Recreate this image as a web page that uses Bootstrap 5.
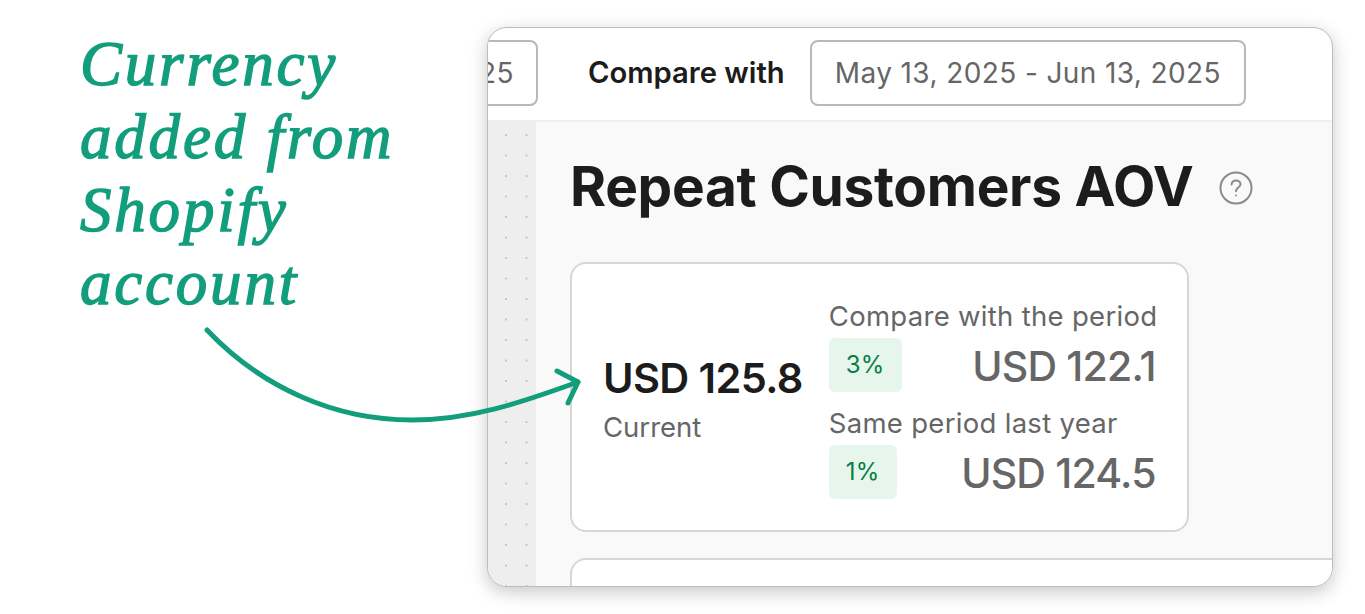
<!DOCTYPE html>
<html lang="en">
<head>
    <meta charset="UTF-8">
    <title>Repeat Customers AOV</title>
    <link href="https://cdn.jsdelivr.net/npm/bootstrap@5.3.0/dist/css/bootstrap.min.css" rel="stylesheet">
    <style>
        html, body { height: 100%; overflow: hidden; }
        body { background: #fff; font-family: Inter, "Liberation Sans", sans-serif; color: #1c1c1c; }
        .stage { height: 614px; padding: 27px 32px 28px 80px; position: relative; }
        .callout-col { width: 407px; flex: none; padding-top: 1px; }
        .callout { margin: 0; color: #129e7c; font-family: "Liberation Serif", serif; font-style: italic; font-size: 63px; line-height: 73px; letter-spacing: 2.8px; -webkit-text-stroke: 1.4px #129e7c; }
        .callout span { display: block; }
        .arrow { position: absolute; left: 0; top: 0; z-index: 5; pointer-events: none; }
        .app-window { width: 846px; height: 560px; flex: none; background: #fff; border: 1px solid #bdbdbd; border-radius: 20px; overflow: hidden; box-shadow: 0 5px 18px rgba(0,0,0,.22); }
        .top-bar { height: 94px; flex: none; padding-top: 12px; padding-bottom: 15px; border-bottom: 2px solid #efefef; }
        .date-box { height: 66px; flex: none; border: 2px solid #b8b8b8; border-radius: 8px; color: #666; font-size: 28px; letter-spacing: .4px; padding: 0 23px; background: #fff; }
        .date-box-cut { width: 120px; margin-left: -70px; padding-right: 22px; }
        .compare-label { font-size: 29.2px; font-weight: 600; margin: 0 25px 0 50px; white-space: nowrap; }
        .side-strip { width: 48px; flex: none; background-color: #eee; background-image: radial-gradient(circle at 1px 1px, #bcbcbc 0.6px, transparent 1.1px); background-size: 20.5px 20.5px; background-position: 17px 12px; }
        .main-area { background: #f9f9f9; padding: 0 0 0 34px; min-width: 0; }
        .title-row { margin-top: 33px; }
        .page-title { font-size: 55px; font-weight: 700; line-height: 62px; margin: 0; letter-spacing: -.3px; white-space: nowrap; }
        .help-ico { width: 34px; height: 34px; margin-left: 25px; margin-top: 3px; }
        .metric-box { width: 619px; height: 270px; margin-top: 45px; flex: none; background: #fff; border: 2px solid #d6d6d6; border-radius: 16px; padding: 0 30px 0 31px; }
        .metric-box-next { width: 900px; margin-top: 26px; }
        .now-block { padding-top: 5px; }
        .now-val { font-size: 41.5px; font-weight: 600; line-height: 48px; letter-spacing: -.6px; white-space: nowrap; }
        .now-label { font-size: 27.5px; line-height: 38px; color: #666; margin-top: 6px; }
        .cmp-col { width: 327px; margin-left: 26px; flex: none; padding-top: 2px; }
        .cmp-label { font-size: 27.5px; line-height: 38px; color: #666; letter-spacing: .3px; white-space: nowrap; }
        .cmp-row { height: 54px; margin: 3px 0 12px; }
        .pct-tag { height: 54px; padding: 0 17px; background: #e6f6ec; color: #0a7d45; border-radius: 6px; font-size: 24px; letter-spacing: .3px; }
        .cmp-val { font-size: 41px; font-weight: 500; color: #666; letter-spacing: -.8px; white-space: nowrap; padding-top: 4px; }
    </style>
</head>
<body>

<div class="stage d-flex">
    <div class="callout-col">
        <p class="callout"><span>Currency</span><span>added from</span><span>Shopify</span><span>account</span></p>
    </div>

    <div class="app-window d-flex flex-column">
        <div class="top-bar d-flex align-items-center">
            <div class="date-box date-box-cut d-flex align-items-center justify-content-end">2025</div>
            <div class="compare-label">Compare with</div>
            <div class="date-box d-flex align-items-center text-nowrap">May 13, 2025 - Jun 13, 2025</div>
        </div>
        <div class="d-flex flex-grow-1 overflow-hidden">
            <div class="side-strip"></div>
            <div class="main-area flex-grow-1 d-flex flex-column">
                <div class="title-row d-flex align-items-center">
                    <h1 class="page-title">Repeat Customers AOV</h1>
                    <svg class="help-ico" viewBox="0 0 34 34" fill="none" stroke="#8a8a8a" stroke-width="2" stroke-linecap="round">
                        <circle cx="17" cy="17" r="15.5"/>
                        <path d="M12.6 13.4c.3-2.5 2.2-4 4.5-4 2.500 0 4.400 1.600 4.400 3.800 0 3.300-4.500 3.500-4.500 7"/>
                        <circle cx="17" cy="24.500" r="1" fill="#8a8a8a" stroke="none"/>
                    </svg>
                </div>
                <div class="metric-box d-flex align-items-center">
                    <div class="now-block flex-shrink-0">
                        <div class="now-val">USD 125.8</div>
                        <div class="now-label">Current</div>
                    </div>
                    <div class="cmp-col">
                        <div class="cmp-label">Compare with the period</div>
                        <div class="cmp-row d-flex align-items-center justify-content-between">
                            <span class="pct-tag d-flex align-items-center">3%</span>
                            <span class="cmp-val">USD 122.1</span>
                        </div>
                        <div class="cmp-label">Same period last year</div>
                        <div class="cmp-row d-flex align-items-center justify-content-between mb-0">
                            <span class="pct-tag d-flex align-items-center">1%</span>
                            <span class="cmp-val">USD 124.5</span>
                        </div>
                    </div>
                </div>
                <div class="metric-box metric-box-next"></div>
            </div>
        </div>
    </div>

    <svg class="arrow" width="1365" height="614" fill="none" stroke="#129e7c" stroke-width="5" stroke-linecap="round" stroke-linejoin="round">
        <path d="M207 330C262 388 335 420 412 420C470 420 520 403 578 382"/>
        <path d="M557 371L578 382L568 403"/>
    </svg>
</div>

<script src="https://cdn.jsdelivr.net/npm/bootstrap@5.3.0/dist/js/bootstrap.bundle.min.js"></script>
</body>
</html>
